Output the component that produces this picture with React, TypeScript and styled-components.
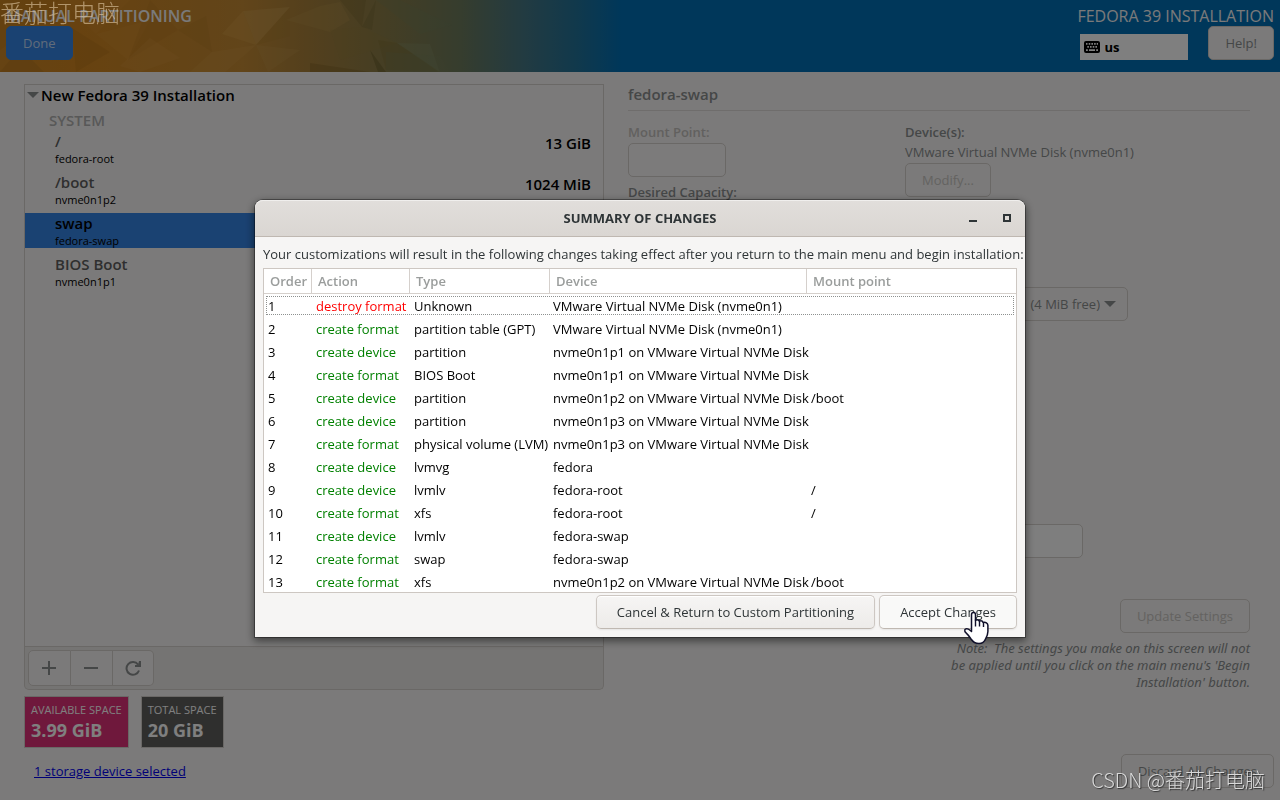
import React from "react";
import styled, { createGlobalStyle, css } from "styled-components";

const Global = createGlobalStyle`
  *, *::before, *::after { box-sizing: border-box; }
  body {
    margin: 0;
    background: #f6f5f4;
    color: #8b8e8f;
    font-family: "Open Sans", "Noto Sans", "Noto Sans CJK SC", sans-serif;
    font-size: 13px;
    line-height: 20px;
  }
  h1, h2, h3, p, ul { margin: 0; padding: 0; font-size: inherit; font-weight: inherit; }
  ul { list-style: none; }
  button, input, select { font: inherit; color: inherit; }
`;

const Page = styled.div`
  min-height: 100vh;
  display: flex;
  flex-direction: column;
`;

/* ---------- header ---------- */

const Header = styled.header`
  position: relative;
  display: flex;
  justify-content: space-between;
  height: 72px;
  padding: 6px 6px 0;
  color: #f4f4f4;
  font-size: 16px;
  background: #006eb4;
`;

const Artwork = styled.svg`
  position: absolute;
  inset: 0 auto 0 0;
  width: 640px;
  height: 72px;
`;

const HeaderSide = styled.div`
  position: relative;
  display: flex;
  flex-direction: column;
  align-items: flex-start;
`;

const ScreenTitle = styled.h1`
  font-weight: 600;
`;

const HeaderTools = styled.div`
  align-self: stretch;
  display: flex;
  justify-content: flex-end;
  align-items: flex-end;
  gap: 20px;
`;

const KeyboardLayout = styled.div`
  display: flex;
  align-items: center;
  gap: 4px;
  width: 108px;
  height: 26px;
  padding: 0 4px;
  background: #fff;
  color: #000;
  font-size: 13px;
  font-weight: 700;
`;

const Button = styled.button<{ $tone?: "primary" | "muted" | "raised" | "hover" }>`
  height: 34px;
  padding: 0 16px;
  border: 1px solid #d5d0cc;
  border-radius: 5px;
  background: #f6f5f4;
  color: #8b8e8f;
  font-size: 13px;
  white-space: nowrap;
  ${({ $tone }) => $tone === "primary" && css`
    background: #3584e4;
    border-color: #3584e4;
    color: #c0d8f5;
  `}
  ${({ $tone }) => $tone === "muted" && css`
    color: #c8c5c2;
  `}
  ${({ $tone }) => ($tone === "raised" || $tone === "hover") && css`
    padding: 0 20px;
    border-color: #cdc7c2;
    border-bottom-color: #bfb8b1;
    color: #2e3436;
    background: ${$tone === "hover" ? "#f9f9f8" : "linear-gradient(#f6f5f4, #edebe9)"};
    box-shadow: inset 0 1px #fff, 0 1px 2px rgba(0, 0, 0, 0.07);
  `}
`;

/* ---------- partition list ---------- */

const Main = styled.main`
  flex: 1;
  display: grid;
  grid-template-columns: minmax(0, 580fr) minmax(0, 622fr);
  gap: 24px;
  padding: 12px 30px 0 24px;
`;

const Column = styled.section`
  display: flex;
  flex-direction: column;
`;

const TreeBox = styled.div`
  height: 563px;
  border: 1px solid #d5d0cc;
  color: #000;
`;

const TreeHeading = styled.h2`
  display: flex;
  align-items: center;
  gap: 2px;
  height: 20px;
  padding-left: 2px;
  font-size: 15px;
  font-weight: 600;
`;

const TreeGroup = styled.h3`
  padding: 5px 24px 0;
  height: 26px;
  color: #b0b0b0;
  font-size: 15px;
  font-weight: 600;
`;

const MountList = styled.ul`
  display: flex;
  flex-direction: column;
  gap: 6px;
`;

const Mount = styled.li<{ $selected?: boolean }>`
  display: flex;
  justify-content: space-between;
  height: 35px;
  padding: 0 12px 0 30px;
  background: ${({ $selected }) => ($selected ? "#3584e4" : "transparent")};
`;

const MountName = styled.div<{ $selected?: boolean }>`
  color: ${({ $selected }) => ($selected ? "#000" : "#5e5e5e")};
  font-size: 15px;
  font-weight: 600;
  line-height: 20px;
`;

const MountDevice = styled.div`
  font-size: 11px;
  line-height: 15px;
`;

const MountSize = styled.div`
  font-size: 15px;
  font-weight: 600;
  line-height: 25px;
`;

const Toolbar = styled.div`
  display: flex;
  height: 43px;
  padding: 3px;
  border: 1px solid #d5d0cc;
  border-top: 0;
  border-radius: 0 0 5px 5px;
  background: #ebe8e6;
`;

const ToolButton = styled.button`
  display: grid;
  place-items: center;
  width: 42px;
  height: 36px;
  padding: 0 1px 0 0;
  border: 1px solid #d5d0cc;
  background: #f6f5f4;
  & + & { border-left: 0; }
  &:first-child { width: 43px; border-radius: 5px 0 0 5px; }
  &:last-child { width: 41px; border-radius: 0 5px 5px 0; }
`;

const Spaces = styled.div`
  display: flex;
  gap: 12px;
  padding-top: 6px;
`;

const SpaceBox = styled.div<{ $color: string }>`
  padding: 3px 6px;
  height: 52px;
  border: 1px solid #d5d0cc;
  background: ${({ $color }) => $color};
  color: #fff;
  font-size: 11px;
`;

const SpaceValue = styled.div`
  font-size: 18px;
  font-weight: 700;
`;

/* ---------- device settings ---------- */

const DeviceTitle = styled.h2`
  height: 27px;
  border-bottom: 1px solid #dedbd8;
  font-size: 15px;
  font-weight: 600;
`;

const Settings = styled.div`
  display: grid;
  grid-template-columns: minmax(0, 277fr) minmax(0, 345fr);
  padding-top: 11px;
`;

const Fields = styled.div`
  display: flex;
  flex-direction: column;
  align-items: flex-start;
`;

const Label = styled.label<{ $muted?: boolean }>`
  color: ${({ $muted }) => ($muted ? "#c4c1be" : "inherit")};
  font-weight: 600;
  line-height: 21px;
`;

const DeviceName = styled.p`
  margin-bottom: 2px;
  line-height: 18px;
`;

const TextBox = styled.input<{ $wide?: boolean }>`
  width: ${({ $wide }) => ($wide ? 178 : 98)}px;
  height: 34px;
  margin-bottom: 5px;
  border: 1px solid #d5d0cc;
  border-radius: 5px;
  background: ${({ $wide }) => ($wide ? "#fcfcfc" : "#f8f7f7")};
`;

const SelectWrap = styled.div`
  position: relative;
  margin: 90px 0 203px;
  svg { position: absolute; right: 12px; top: 14px; }
`;

const VolumeSelect = styled.select`
  appearance: none;
  width: 223px;
  height: 34px;
  padding: 0 27px 0 8px;
  border: 1px solid #d5d0cc;
  border-radius: 5px;
  background: #f6f5f4;
  text-align: right;
  text-align-last: right;
`;

const Apply = styled.div`
  display: flex;
  flex-direction: column;
  align-items: flex-end;
  gap: 7px;
  padding-top: 36px;
`;

const Note = styled.p`
  font-family: "Noto Sans", "Open Sans", sans-serif;
  font-style: italic;
  line-height: 17px;
  text-align: right;
  white-space: pre;
`;

const Footer = styled.footer`
  display: flex;
  justify-content: space-between;
  padding: 6px 6px 12px 34px;
`;

const StorageLink = styled.a`
  align-self: center;
  color: #0000ee;
`;

/* ---------- summary dialog ---------- */

const Backdrop = styled.div`
  position: fixed;
  inset: 0;
  display: grid;
  place-items: center;
  padding-top: 37px;
  background: rgba(0, 0, 0, 0.5);
`;

const Dialog = styled.div`
  width: 770px;
  border-radius: 8px 8px 0 0;
  background: #f6f5f4;
  color: #2e3436;
  box-shadow: 0 0 0 1px rgba(0, 0, 0, 0.35), 0 3px 9px 1px rgba(0, 0, 0, 0.5);
`;

const TitleBar = styled.div`
  display: grid;
  grid-template-columns: 1fr auto 1fr;
  align-items: center;
  height: 37px;
  border-bottom: 1px solid #bfb8b1;
  border-radius: 8px 8px 0 0;
  background: linear-gradient(#e1dedb, #dad6d2);
  box-shadow: inset 0 1px rgba(255, 255, 255, 0.5);
`;

const DialogTitle = styled.h2`
  grid-column: 2;
  font-weight: 700;
`;

const WindowControls = styled.div`
  display: flex;
  justify-content: flex-end;
  gap: 10px;
  padding-right: 6px;
`;

const WindowButton = styled.button`
  display: grid;
  place-items: center;
  width: 24px;
  height: 24px;
  padding: 0;
  border: 0;
  background: none;
`;

const DialogBody = styled.div`
  padding: 8px;
`;

const Intro = styled.p`
  height: 23px;
  line-height: 18px;
  white-space: nowrap;
`;

const TableFrame = styled.div`
  height: 325px;
  overflow: hidden;
  border: 1px solid #cdc7c2;
  background: #fff;
`;

const ActionTable = styled.table`
  width: 100%;
  border-collapse: separate;
  border-spacing: 0;
  table-layout: fixed;
  color: #000;
`;

const Col = styled.col<{ $width?: number }>`
  width: ${({ $width }) => ($width ? `${$width}px` : "auto")};
`;

const HeadCell = styled.th`
  height: 25px;
  padding: 0 6px;
  border-bottom: 1px solid #d5d0cc;
  color: #9a9d9c;
  font-weight: 600;
  text-align: left;
  & + & { border-left: 1px solid #d5d0cc; }
`;

const Cell = styled.td<{ $color?: string }>`
  height: 23px;
  padding: 0 0 0 4px;
  color: ${({ $color }) => $color ?? "inherit"};
  white-space: nowrap;
  &:nth-child(2), &:nth-child(3), &:last-child { padding-left: 5px; }
`;

const BodyRow = styled.tr<{ $focused?: boolean }>`
  ${({ $focused }) => $focused && css`
    outline: 1px dotted #8e9190;
    outline-offset: -3px;
    border-radius: 2px;
  `}
`;

const DialogActions = styled.div`
  display: flex;
  justify-content: flex-end;
  gap: 4px;
  padding-top: 2px;
`;

/* ---------- overlays ---------- */

const PointerAnchor = styled.div`
  position: relative;
  display: flex;
`;

const Pointer = styled.svg`
  position: absolute;
  right: 27px;
  bottom: -16px;
  pointer-events: none;
`;

const TopMark = styled.div`
  position: absolute;
  top: 0;
  left: 0;
  color: rgba(226, 204, 166, 0.6);
  font-family: "Noto Sans CJK SC", sans-serif;
  font-size: 24px;
  font-weight: 300;
  line-height: 24px;
`;

const BottomMark = styled.div`
  position: fixed;
  right: 15px;
  bottom: 8px;
  color: #d9d9d9;
  font-family: "Noto Sans CJK SC", sans-serif;
  font-size: 20px;
  font-weight: 300;
  line-height: 24px;
  text-shadow: 1px 1px 1px #333;
`;

const actions: [string, string, string, string][] = [
  ["destroy format", "Unknown", "VMware Virtual NVMe Disk (nvme0n1)", ""],
  ["create format", "partition table (GPT)", "VMware Virtual NVMe Disk (nvme0n1)", ""],
  ["create device", "partition", "nvme0n1p1 on VMware Virtual NVMe Disk", ""],
  ["create format", "BIOS Boot", "nvme0n1p1 on VMware Virtual NVMe Disk", ""],
  ["create device", "partition", "nvme0n1p2 on VMware Virtual NVMe Disk", "/boot"],
  ["create device", "partition", "nvme0n1p3 on VMware Virtual NVMe Disk", ""],
  ["create format", "physical volume (LVM)", "nvme0n1p3 on VMware Virtual NVMe Disk", ""],
  ["create device", "lvmvg", "fedora", ""],
  ["create device", "lvmlv", "fedora-root", "/"],
  ["create format", "xfs", "fedora-root", "/"],
  ["create device", "lvmlv", "fedora-swap", ""],
  ["create format", "swap", "fedora-swap", ""],
  ["create format", "xfs", "nvme0n1p2 on VMware Virtual NVMe Disk", "/boot"],
];

const mounts = [
  { name: "/", device: "fedora-root", size: "13 GiB" },
  { name: "/boot", device: "nvme0n1p2", size: "1024 MiB" },
  { name: "swap", device: "fedora-swap", size: "", selected: true },
  { name: "BIOS Boot", device: "nvme0n1p1", size: "" },
];

/* Facets of the header artwork: points, colour, opacity */
const facets: [string, string, number][] = [
  ["0,0 60,0 30,30 0,50", "#c07a18", 0.35],
  ["60,0 130,0 96,34", "#e09838", 0.2],
  ["0,72 44,72 20,48", "#b07420", 0.35],
  ["72,28 110,52 76,72", "#b07018", 0.3],
  ["96,34 150,20 128,60", "#e09a3c", 0.2],
  ["150,0 178,30 128,60", "#b0701a", 0.22],
  ["150,38 180,58 140,72 120,66", "#e0a048", 0.22],
  ["178,30 206,16 212,52", "#b07820", 0.25],
  ["212,52 256,45 225,72 190,72", "#dca24c", 0.22],
  ["256,45 243,11 222,34", "#dda851", 0.3],
  ["243,11 290,7 256,45", "#d8ac5c", 0.32],
  ["256,45 290,7 290,36", "#a87a28", 0.25],
  ["256,45 300,50 268,72", "#c99a50", 0.25],
  ["286,20 320,6 340,2 350,20 330,32", "#c09a50", 0.25],
  ["340,0 366,0 362,27", "#6e6028", 0.25],
  ["362,27 376,0 372,30", "#6e6430", 0.3],
  ["330,30 362,27 397,43 340,60", "#98803a", 0.22],
  ["376,0 400,0 452,25 420,34", "#6f8060", 0.2],
  ["397,43 430,44 440,73", "#8a946c", 0.32],
  ["378,40 397,43 440,72 386,70", "#7a6a2c", 0.28],
  ["370,50 386,72 378,72", "#4e4818", 0.3],
  ["386,52 440,56 450,72 386,72", "#78805c", 0.25],
  ["310,63 370,72 310,72", "#6e5418", 0.28],
];

function DownArrow() {
  return (
    <svg width="12" height="6" viewBox="0 0 12 6" aria-hidden="true">
      <path d="M0 0H12L6 6Z" fill="#8b8e8f" />
    </svg>
  );
}

function KeyboardIcon() {
  return (
    <svg width="16" height="12" viewBox="0 0 16 12" aria-hidden="true">
      <rect width="16" height="12" rx="2" fill="#000" />
      <path
        d="M2 2h1.500v1.800H2zM4.700 2h1.600v1.800H4.700zM7.400 2H9v1.800H7.400zM10.100 2h1.600v1.800h-1.600zM12.700 2H14v1.800h-1.300zM3.300 5h1.600v1.800H3.300zM6 5h1.600v1.800H6zM8.700 5h1.600v1.800H8.700zM11.400 5H13v1.800h-1.600zM2 8.200h1.800V10H2zM5 8.200h6V10H5zM12.200 8.200H14V10h-1.800z"
        fill="#fff"
      />
    </svg>
  );
}

function HandPointer() {
  return (
    <Pointer width="28" height="34" viewBox="0 0 28 34" aria-hidden="true">
      <path
        d="M11.500 1.500c1.300 0 2 .9 2 2.200v5.500c1.700-.8 3.400-.3 3.800.9 1.700-.6 3.300 0 3.800 1.300 2.600-.4 4.600.6 4.800 3v6c0 3-1.100 5-2.400 7.600-1.100 3-3 4.500-6.500 4.500-3.700 0-6-1.500-8-4.500-1.500-2.400-2.900-4.200-4.500-5.600-1.500-1.200-2.100-2.400-1.700-3.600.6-1.600 3.200-1.300 4.900.2l1.800 1.500V3.700c0-1.300.7-2.200 2-2.200z"
        fill="#fff"
        stroke="#10102a"
        strokeWidth="1.500"
        strokeLinejoin="round"
      />
      <path d="M13.500 8.500v7M17.500 10v5.500M21.500 11.500V16" stroke="#10102a" strokeWidth="1.400" fill="none" />
    </Pointer>
  );
}

export default function App() {
  return (
    <>
      <Global />
      <Page>
        <Header>
          <Artwork viewBox="0 0 640 72" preserveAspectRatio="none" aria-hidden="true">
            <defs>
              <linearGradient id="sunset">
                <stop offset="0" stopColor="#cc8626" />
                <stop offset="0.12" stopColor="#d08520" />
                <stop offset="0.38" stopColor="#c48a34" />
                <stop offset="0.48" stopColor="#a8803a" />
                <stop offset="0.6" stopColor="#8a7c48" />
                <stop offset="0.72" stopColor="#6c7a5c" />
                <stop offset="0.82" stopColor="#447684" />
                <stop offset="0.9" stopColor="#227298" />
                <stop offset="0.97" stopColor="#006eb4" />
              </linearGradient>
            </defs>
            <rect width="640" height="72" fill="url(#sunset)" />
            {facets.map(([points, fill, opacity]) => (
              <polygon key={points} points={points} fill={fill} opacity={opacity} />
            ))}
          </Artwork>
          <HeaderSide>
            <ScreenTitle>MANUAL PARTITIONING</ScreenTitle>
            <Button $tone="primary">Done</Button>
          </HeaderSide>
          <HeaderSide>
            <div>FEDORA 39 INSTALLATION</div>
            <HeaderTools>
              <KeyboardLayout>
                <KeyboardIcon />
                us
              </KeyboardLayout>
              <Button>Help!</Button>
            </HeaderTools>
          </HeaderSide>
        </Header>

        <Main>
          <Column>
            <TreeBox>
              <TreeHeading>
                <DownArrow />
                New Fedora 39 Installation
              </TreeHeading>
              <TreeGroup>SYSTEM</TreeGroup>
              <MountList>
                {mounts.map((m) => (
                  <Mount key={m.name} $selected={m.selected}>
                    <div>
                      <MountName $selected={m.selected}>{m.name}</MountName>
                      <MountDevice>{m.device}</MountDevice>
                    </div>
                    <MountSize>{m.size}</MountSize>
                  </Mount>
                ))}
              </MountList>
            </TreeBox>
            <Toolbar>
              <ToolButton aria-label="Add mount point">
                <svg width="14" height="14" viewBox="0 0 14 14">
                  <path d="M7 0v14M0 7h14" stroke="#8b8e8f" strokeWidth="2" />
                </svg>
              </ToolButton>
              <ToolButton aria-label="Remove mount point">
                <svg width="14" height="14" viewBox="0 0 14 14">
                  <path d="M0 7h14" stroke="#8b8e8f" strokeWidth="2" />
                </svg>
              </ToolButton>
              <ToolButton aria-label="Reload storage configuration">
                <svg width="16" height="16" viewBox="0 0 16 16">
                  <path d="M13.100 4.600A6.400 6.400 0 1 0 14 10.500" fill="none" stroke="#8b8e8f" strokeWidth="2" />
                  <path d="M16 1v6h-6V5h3l1-4z" fill="#8b8e8f" />
                </svg>
              </ToolButton>
            </Toolbar>
            <Spaces>
              <SpaceBox $color="#df3078">
                AVAILABLE SPACE
                <SpaceValue>3.99 GiB</SpaceValue>
              </SpaceBox>
              <SpaceBox $color="#5e5e5c">
                TOTAL SPACE
                <SpaceValue>20 GiB</SpaceValue>
              </SpaceBox>
            </Spaces>
          </Column>

          <Column>
            <DeviceTitle>fedora-swap</DeviceTitle>
            <Settings>
              <Fields>
                <Label htmlFor="mount-point" $muted>Mount Point:</Label>
                <TextBox id="mount-point" disabled />
                <Label as="div">Desired Capacity:</Label>
              </Fields>
              <Fields>
                <Label as="div">Device(s):</Label>
                <DeviceName>VMware Virtual NVMe Disk (nvme0n1)</DeviceName>
                <Button $tone="muted" disabled>Modify...</Button>
                <SelectWrap>
                  <VolumeSelect aria-label="Volume group">
                    <option>(4 MiB free)</option>
                  </VolumeSelect>
                  <DownArrow />
                </SelectWrap>
                <TextBox $wide aria-label="Name" />
              </Fields>
            </Settings>
            <Apply>
              <Button $tone="muted" disabled>Update Settings</Button>
              <Note>
                {"Note:  The settings you make on this screen will not\nbe applied until you click on the main menu's 'Begin\nInstallation' button."}
              </Note>
            </Apply>
          </Column>
        </Main>

        <Footer>
          <StorageLink href="#storage">1 storage device selected</StorageLink>
          <Button>Discard All Changes</Button>
        </Footer>
      </Page>

      <Backdrop>
        <Dialog role="dialog" aria-modal="true" aria-labelledby="summary-title">
          <TitleBar>
            <DialogTitle id="summary-title">SUMMARY OF CHANGES</DialogTitle>
            <WindowControls>
              <WindowButton aria-label="Minimize">
                <svg width="8" height="8" viewBox="0 0 8 8"><path d="M0 6h8v2H0z" fill="#2e3436" /></svg>
              </WindowButton>
              <WindowButton aria-label="Maximize">
                <svg width="8" height="8" viewBox="0 0 8 8"><path d="M1 1h6v6H1z" fill="none" stroke="#2e3436" strokeWidth="2" /></svg>
              </WindowButton>
            </WindowControls>
          </TitleBar>
          <DialogBody>
            <Intro>
              Your customizations will result in the following changes taking effect after you return to the main menu and begin installation:
            </Intro>
            <TableFrame>
              <ActionTable>
                <colgroup>
                  <Col $width={47} />
                  <Col $width={98} />
                  <Col $width={140} />
                  <Col $width={257} />
                  <Col />
                </colgroup>
                <thead>
                  <tr>
                    {["Order", "Action", "Type", "Device", "Mount point"].map((h) => (
                      <HeadCell key={h} scope="col">{h}</HeadCell>
                    ))}
                  </tr>
                </thead>
                <tbody>
                  {actions.map(([action, type, device, mount], i) => (
                    <BodyRow key={i} $focused={i === 0}>
                      <Cell>{i + 1}</Cell>
                      <Cell $color={action.startsWith("destroy") ? "#ff0000" : "#008000"}>{action}</Cell>
                      <Cell>{type}</Cell>
                      <Cell>{device}</Cell>
                      <Cell>{mount}</Cell>
                    </BodyRow>
                  ))}
                </tbody>
              </ActionTable>
            </TableFrame>
            <DialogActions>
              <Button $tone="raised">Cancel &amp; Return to Custom Partitioning</Button>
              <PointerAnchor>
                <Button $tone="hover">Accept Changes</Button>
                <HandPointer />
              </PointerAnchor>
            </DialogActions>
          </DialogBody>
        </Dialog>
      </Backdrop>
      <TopMark>番茄打电脑</TopMark>
      <BottomMark>CSDN @番茄打电脑</BottomMark>
    </>
  );
}
